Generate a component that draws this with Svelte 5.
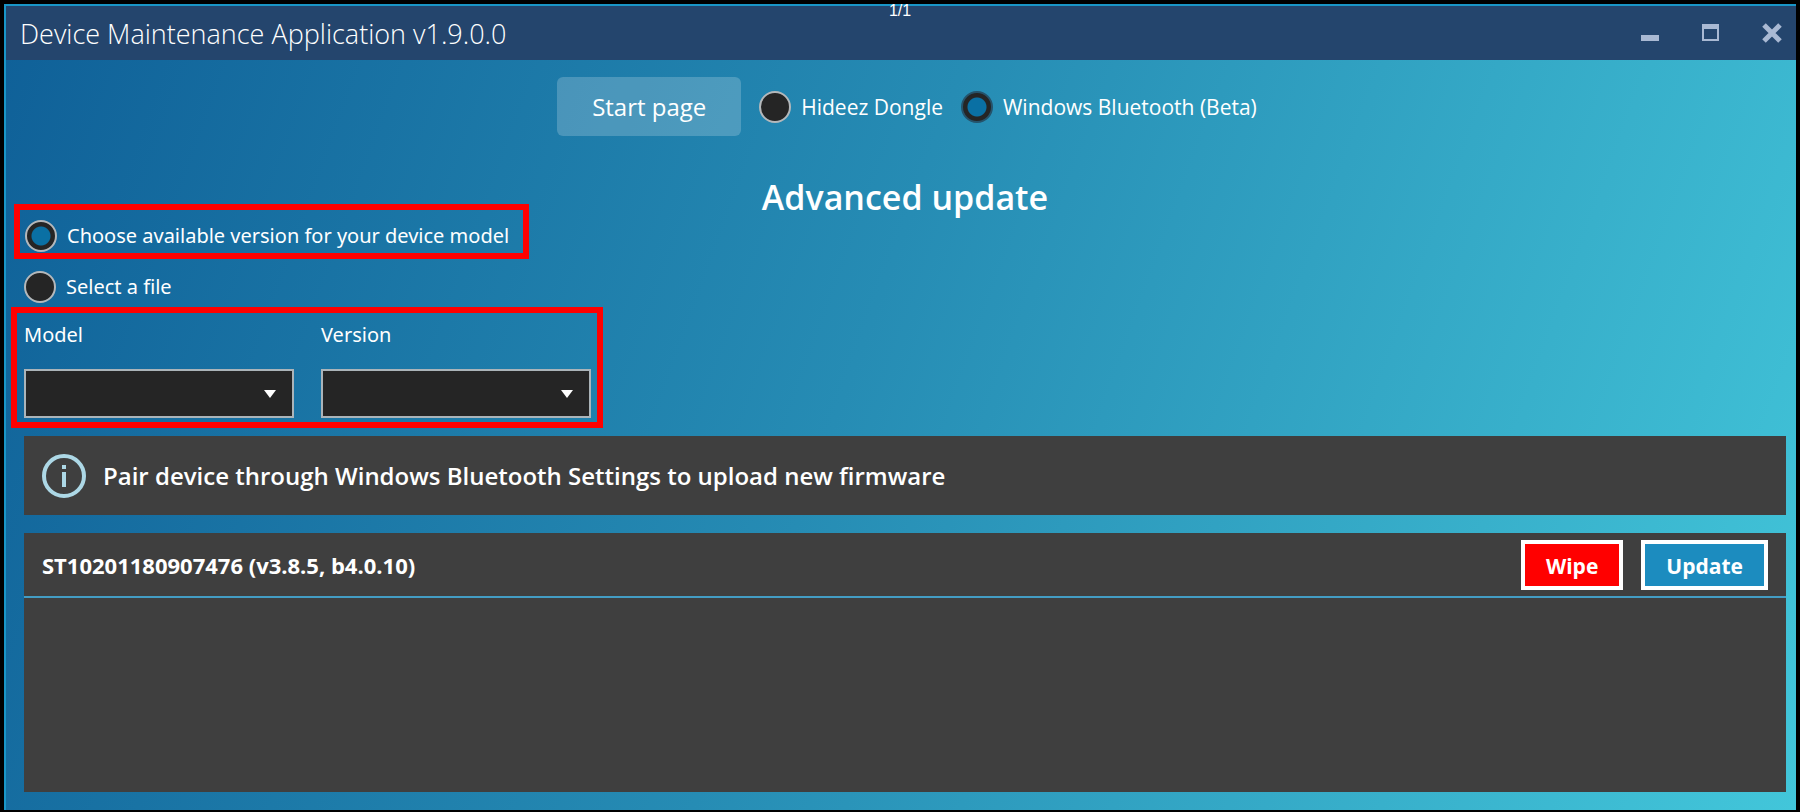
<script>
  let transport = $state('bluetooth');
  let source = $state('version');
  let model = $state('');
  let version = $state('');
  const devices = [{ serial: 'ST10201180907476', firmware: 'v3.8.5', boot: 'b4.0.10' }];
</script>

<div class="screen">
  <div class="counter">1/1</div>
  <div class="window">
    <header class="titlebar">
      <span class="title">Device Maintenance Application v1.9.0.0</span>
      <div class="controls">
        <button aria-label="Minimize"><svg width="20" height="20" viewBox="0 0 20 20"><path d="M1 12h18v6H1z" fill="#a9b9d3" /></svg></button>
        <button aria-label="Maximize"><svg width="20" height="20" viewBox="0 0 20 20"><path fill-rule="evenodd" d="M1 1h17v17H1zM3 6v10h13V6z" fill="#a9b9d3" /></svg></button>
        <button aria-label="Close"><svg width="20" height="20" viewBox="0 0 20 20"><path d="M2 2l16 16M18 2L2 18" stroke="#a9b9d3" stroke-width="5" /></svg></button>
      </div>
    </header>

    <main>
      <nav class="toolbar">
        <button class="start">Start page</button>
        <label class="option"><input type="radio" name="transport" value="dongle" bind:group={transport} />Hideez Dongle</label>
        <label class="option borderless"><input type="radio" name="transport" value="bluetooth" bind:group={transport} />Windows Bluetooth (Beta)</label>
      </nav>

      <section class="setup">
        <h1>Advanced update</h1>
        <div class="form">
          <div class="mark mark-source">
            <label class="option"><input type="radio" name="source" value="version" bind:group={source} />Choose available version for your device model</label>
          </div>
          <label class="option file"><input type="radio" name="source" value="file" bind:group={source} />Select a file</label>
          <div class="mark mark-fields">
            <div class="field">
              <label for="model">Model</label>
              <div class="combo">
                <select id="model" bind:value={model}><option value=""></option></select>
                <svg width="12" height="8" viewBox="0 0 12 8"><path d="M0 0h12L6 8z" fill="#fff" /></svg>
              </div>
            </div>
            <div class="field">
              <label for="version">Version</label>
              <div class="combo">
                <select id="version" bind:value={version}><option value=""></option></select>
                <svg width="12" height="8" viewBox="0 0 12 8"><path d="M0 0h12L6 8z" fill="#fff" /></svg>
              </div>
            </div>
          </div>
        </div>
      </section>

      <section class="notice">
        <svg width="44" height="44" viewBox="0 0 44 44">
          <circle cx="22" cy="22" r="20" fill="none" stroke="#add8e6" stroke-width="4" />
          <path d="M20 11h4v4h-4zM20 18h4v15h-4z" fill="#add8e6" />
        </svg>
        <p>Pair device through Windows Bluetooth Settings to upload new firmware</p>
      </section>

      <section class="devices">
        {#each devices as device}
          <div class="device">
            <span class="name">{device.serial} ({device.firmware}, {device.boot})</span>
            <button class="wipe">Wipe</button>
            <button class="update">Update</button>
          </div>
        {/each}
      </section>
    </main>
  </div>
</div>

<style>
  :global(body) {
    margin: 0;
    background: #000;
  }
  .screen {
    box-sizing: border-box;
    min-height: 100vh;
    padding: 4px 4px 2px;
    display: flex;
    position: relative;
    font-family: 'Open Sans', 'Noto Sans', sans-serif;
    color: #fff;
  }
  .counter {
    position: absolute;
    top: 0;
    left: 0;
    right: 0;
    text-align: center;
    font: 16px/21px 'Liberation Sans', sans-serif;
    pointer-events: none;
  }
  .window {
    flex: 1;
    display: flex;
    flex-direction: column;
    border-top: 2px solid #1996c8;
    border-left: 2px solid #1996c8;
    background: linear-gradient(110deg, #0f6098 0%, #268cb4 47%, #38b0cb 80%, #42c6da 100%);
  }
  .titlebar {
    height: 54px;
    padding: 0 14px;
    display: flex;
    align-items: center;
    justify-content: space-between;
    background: #24456d;
  }
  .title {
    font-size: 27px;
    font-weight: 300;
  }
  .controls {
    display: flex;
    gap: 41px;
  }
  button {
    font-family: inherit;
    color: #fff;
    border: 0;
    cursor: pointer;
  }
  .controls button {
    display: flex;
    padding: 0;
    background: none;
  }
  main {
    flex: 1;
    display: flex;
    flex-direction: column;
    padding: 17px 10px 18px 18px;
  }
  .toolbar {
    display: flex;
    justify-content: center;
    align-items: center;
    gap: 18px;
    padding-left: 4px;
    font-size: 21px;
  }
  .start {
    width: 184px;
    height: 59px;
    border-radius: 6px;
    background: rgba(255, 255, 255, 0.2);
    font-size: 24px;
  }
  .option {
    display: flex;
    align-items: center;
    gap: 10px;
    line-height: 32px;
    white-space: nowrap;
  }
  input {
    appearance: none;
    flex: none;
    box-sizing: border-box;
    width: 32px;
    height: 32px;
    margin: 0;
    border: 2px solid #b4b8bb;
    border-radius: 50%;
    background: #252525;
  }
  input:checked {
    background: radial-gradient(circle, #0a70a4 9px, #252525 10px);
  }
  .borderless input {
    border-color: #25536b;
  }
  .setup {
    display: grid;
    margin-top: 41px;
  }
  h1 {
    grid-area: 1 / 1;
    margin: 0;
    justify-self: center;
    font-size: 34px;
    font-weight: 600;
    line-height: 40px;
  }
  .form {
    grid-area: 1 / 1;
    justify-self: start;
    padding-top: 27px;
    font-family: 'Noto Sans', sans-serif;
    font-size: 20px;
  }
  .mark {
    box-sizing: border-box;
    width: fit-content;
    border: 6px solid #f00;
  }
  .mark-source {
    margin-left: -10px;
    padding: 10px 14px 1px 5px;
  }
  .file {
    margin: 12px 0 4px;
  }
  .mark-fields {
    display: flex;
    gap: 27px;
    margin-left: -13px;
    padding: 7px 6px 4px 7px;
  }
  .field {
    display: flex;
    flex-direction: column;
    gap: 19px;
    line-height: 30px;
  }
  .combo {
    display: grid;
    align-items: center;
  }
  .combo > * {
    grid-area: 1 / 1;
  }
  .combo svg {
    justify-self: end;
    margin-right: 18px;
    pointer-events: none;
  }
  select {
    appearance: none;
    width: 270px;
    height: 49px;
    padding: 0 36px 0 12px;
    border: 2px solid #abb4b9;
    border-radius: 0;
    background: #252525;
    color: #fff;
    font: inherit;
  }
  .notice {
    display: flex;
    align-items: center;
    gap: 17px;
    margin: 8px 0 18px;
    padding: 0 18px;
    min-height: 79px;
    background: #3f3f3f;
  }
  .notice p {
    margin: 0;
    font-size: 24px;
    font-weight: 600;
  }
  .devices {
    flex: 1;
    background: #3f3f3f;
  }
  .device {
    display: flex;
    align-items: center;
    gap: 18px;
    padding: 7px 18px 6px;
    border-bottom: 2px solid #439dc4;
  }
  .name {
    flex: 1;
    font-size: 22px;
    font-weight: 700;
  }
  .device button {
    height: 50px;
    padding: 2px 21px 0;
    border: 4px solid #fff;
    font-size: 21px;
    font-weight: 700;
  }
  .device .wipe {
    background: #f00;
  }
  .device .update {
    background: #1c8cbf;
  }
</style>
